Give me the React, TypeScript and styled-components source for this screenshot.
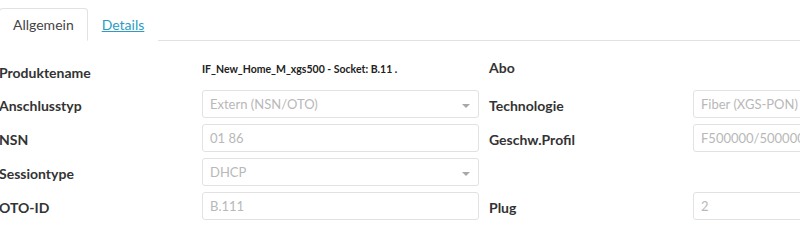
import React from "react";
import styled, { createGlobalStyle } from "styled-components";

const Colors = {
  text: "#333333",
  muted: "#b8b8b8",
  border: "#e2e2e2",
  link: "#2b9cc4",
};

const GlobalStyle = createGlobalStyle`
  html, body {
    margin: 0;
    padding: 0;
    background: #ffffff;
    overflow: hidden;
  }
  body {
    font-family: Lato, "Open Sans", sans-serif;
    color: ${Colors.text};
  }
`;

const Page = styled.div`
  width: 1000px;
  margin-left: -1px;
`;

const TabBar = styled.div`
  display: flex;
  align-items: flex-end;
  height: 40px;
  border-bottom: 1px solid ${Colors.border};
`;

const Tab = styled.div<{ $active?: boolean }>`
  display: flex;
  align-items: center;
  height: 31px;
  padding: 0 13px;
  margin-bottom: -1px;
  font-size: 14px;
  border: 1px solid ${(p) => (p.$active ? Colors.border : "transparent")};
  border-bottom-color: ${(p) => (p.$active ? "#ffffff" : "transparent")};
  border-radius: 4px 4px 0 0;
  background: #ffffff;
  color: ${(p) => (p.$active ? "#444444" : Colors.link)};
  text-decoration: ${(p) => (p.$active ? "none" : "underline")};
`;

const Form = styled.div`
  display: grid;
  grid-template-columns: 203px 277px 10px 204px 277px;
  grid-auto-rows: 28px;
  row-gap: 6px;
  padding-top: 15px;
`;

const Label = styled.div<{ $col: number }>`
  grid-column: ${(p) => p.$col};
  display: flex;
  align-items: center;
  padding-top: 3px;
  font-size: 14px;
  font-weight: 700;
  color: ${Colors.text};
  white-space: nowrap;
`;

const Value = styled.div<{ $col: number }>`
  grid-column: ${(p) => p.$col};
  display: flex;
  align-items: center;
  font-size: 10.5px;
  font-weight: 700;
  color: #222222;
  white-space: nowrap;
`;

const Field = styled.div<{ $col: number }>`
  grid-column: ${(p) => p.$col};
  position: relative;
  display: flex;
  align-items: center;
  padding: 0 7px;
  border: 1px solid ${Colors.border};
  border-radius: 3px;
  font-size: 13px;
  color: ${Colors.muted};
  white-space: nowrap;
  overflow: hidden;
`;

const Caret = styled.span`
  position: absolute;
  right: 8px;
  top: 13px;
  width: 0;
  height: 0;
  border-left: 4px solid transparent;
  border-right: 4px solid transparent;
  border-top: 4px solid #a8a8a8;
`;

const FirstRow = styled.div`
  display: contents;
`;

const FirstLabel = styled(Label)`
  padding-top: 5px;
`;

const FirstValue = styled(Value)`
  padding-bottom: 3px;
`;

const AboLabel = styled(Label)`
  padding-top: 0;
  padding-bottom: 6px;
`;

export default function App() {
  return (
    <Page>
      <GlobalStyle />
      <TabBar>
        <Tab $active>Allgemein</Tab>
        <Tab>Details</Tab>
      </TabBar>
      <Form>
        <FirstRow>
          <FirstLabel $col={1}>Produktename</FirstLabel>
          <FirstValue $col={2}>IF_New_Home_M_xgs500 - Socket: B.11 .</FirstValue>
          <AboLabel $col={4}>Abo</AboLabel>
        </FirstRow>

        <Label $col={1}>Anschlusstyp</Label>
        <Field $col={2}>
          Extern (NSN/OTO)
          <Caret />
        </Field>
        <Label $col={4}>Technologie</Label>
        <Field $col={5}>Fiber (XGS-PON)</Field>

        <Label $col={1}>NSN</Label>
        <Field $col={2}>01 86</Field>
        <Label $col={4}>Geschw.Profil</Label>
        <Field $col={5}>F500000/500000</Field>

        <Label $col={1}>Sessiontype</Label>
        <Field $col={2}>
          DHCP
          <Caret />
        </Field>

        <Label $col={1}>OTO-ID</Label>
        <Field $col={2}>B.111</Field>
        <Label $col={4}>Plug</Label>
        <Field $col={5}>2</Field>
      </Form>
    </Page>
  );
}
